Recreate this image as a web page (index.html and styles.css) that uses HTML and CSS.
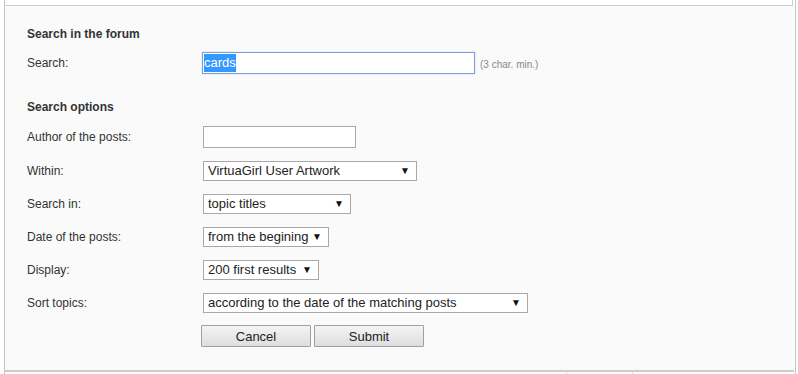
FILE: index.html
```html
<!DOCTYPE html>
<html lang="en">
<head>
  <meta charset="UTF-8">
  <title>Search in the forum</title>
  <link rel="stylesheet" href="styles.css">
</head>
<body>
  <div class="frame">
    <div class="top-strip"></div>
    <form class="search-panel">
      <h3 class="section-title">Search in the forum</h3>
      <div class="form-row">
        <label class="form-label">Search:</label>
        <div class="field">
          <div class="text-input focused"><span class="selected">cards</span></div>
          <span class="hint">(3 char. min.)</span>
        </div>
      </div>

      <h3 class="section-title second">Search options</h3>
      <div class="form-row first">
        <label class="form-label">Author of the posts:</label>
        <div class="field"><input type="text" class="text-input author"></div>
      </div>
      <div class="form-row">
        <label class="form-label">Within:</label>
        <div class="field"><div class="select w-within">VirtuaGirl User Artwork<span class="arrow">&#9660;</span></div></div>
      </div>
      <div class="form-row">
        <label class="form-label">Search in:</label>
        <div class="field"><div class="select w-in">topic titles<span class="arrow">&#9660;</span></div></div>
      </div>
      <div class="form-row">
        <label class="form-label">Date of the posts:</label>
        <div class="field"><div class="select w-date">from the begining<span class="arrow">&#9660;</span></div></div>
      </div>
      <div class="form-row">
        <label class="form-label">Display:</label>
        <div class="field"><div class="select w-display">200 first results<span class="arrow">&#9660;</span></div></div>
      </div>
      <div class="form-row">
        <label class="form-label">Sort topics:</label>
        <div class="field"><div class="select w-sort">according to the date of the matching posts<span class="arrow">&#9660;</span></div></div>
      </div>

      <div class="buttons">
        <button type="button" class="btn">Cancel</button>
        <button type="button" class="btn">Submit</button>
      </div>
    </form>
    <div class="bottom-row">
      <div class="cell c1"></div>
      <div class="cell c2"></div>
      <div class="cell c3"></div>
    </div>
  </div>
</body>
</html>
```

FILE: styles.css
```css
/* Forum search form */
body {
  margin: 0;
  background: #fff;
  font-family: "Liberation Sans", Arial, sans-serif;
  color: #333;
  font-size: 12px;
}

.frame {
  margin-left: 4px;
  width: 790px;
  height: 374px;
  border-left: 1px solid #c4c4c4;
  border-right: 1px solid #c4c4c4;
  display: flex;
  flex-direction: column;
}

.top-strip {
  height: 5px;
  flex-shrink: 0;
  margin-right: 2px;
  background: #fff;
  border-bottom: 1px solid #ccc;
  border-right: 1px solid #ccc;
}

.search-panel {
  background: #fafafa;
  padding: 21px 0 0 22px;
  height: 366px;
  flex-shrink: 0;
  box-sizing: border-box;
  border-bottom: 2px solid #ccc;
  margin-right: 1px;
}

.section-title {
  margin: 0 0 5px;
  font-size: 12px;
  line-height: 14px;
  font-weight: bold;
  color: #333;
}

.section-title.second {
  margin-top: 21px;
  margin-bottom: 5px;
}

.form-row {
  display: flex;
  align-items: center;
  height: 33px;
}

.form-row.first {
  height: 35px;
}

.form-label {
  width: 175px;
  flex-shrink: 0;
}

.field {
  display: flex;
  align-items: center;
}

.text-input {
  box-sizing: border-box;
  height: 22px;
  border: 1px solid #a9a9a9;
  background: #fff;
  font-family: inherit;
  font-size: 13px;
  padding: 0 1px;
  display: flex;
  align-items: center;
}

.text-input.focused {
  width: 273px;
  border-color: #7b9fdc;
  box-shadow: 0 0 1px #9cb8e6;
}

.text-input.author {
  width: 153px;
  margin-left: 1px;
}

.selected {
  background: #3399ff;
  color: #fff;
  line-height: 18px;
}

.hint {
  margin-left: 5px;
  font-size: 10px;
  color: #888;
  padding-top: 3px;
}

.select {
  box-sizing: border-box;
  margin-left: 1px;
  height: 20px;
  border: 1px solid #a9a9a9;
  background: #fff;
  font-size: 13px;
  color: #222;
  padding: 0 0 0 4px;
  display: flex;
  align-items: center;
  justify-content: space-between;
}

.arrow {
  font-size: 10px;
  color: #111;
  width: 16px;
  text-align: left;
}

.w-within { width: 214px; }
.w-in { width: 148px; }
.w-date { width: 126px; }
.w-display { width: 116px; }
.w-sort { width: 325px; }

.buttons {
  margin: 6px 0 0 174px;
  display: flex;
  gap: 3px;
}

.btn {
  width: 110px;
  height: 22px;
  border: 1px solid #a0a0a0;
  border-radius: 1px;
  background: linear-gradient(#f4f4f4, #dedede);
  font-family: inherit;
  font-size: 13px;
  color: #222;
  padding: 0;
}

.bottom-row {
  display: flex;
  flex: 1;
  margin-right: 1px;
}

.cell {
  border-right: 1px solid #ddd;
}

.c1 { width: 561px; }
.c2 { width: 65px; }
.c3 { flex: 1; border-right: none; }
```
